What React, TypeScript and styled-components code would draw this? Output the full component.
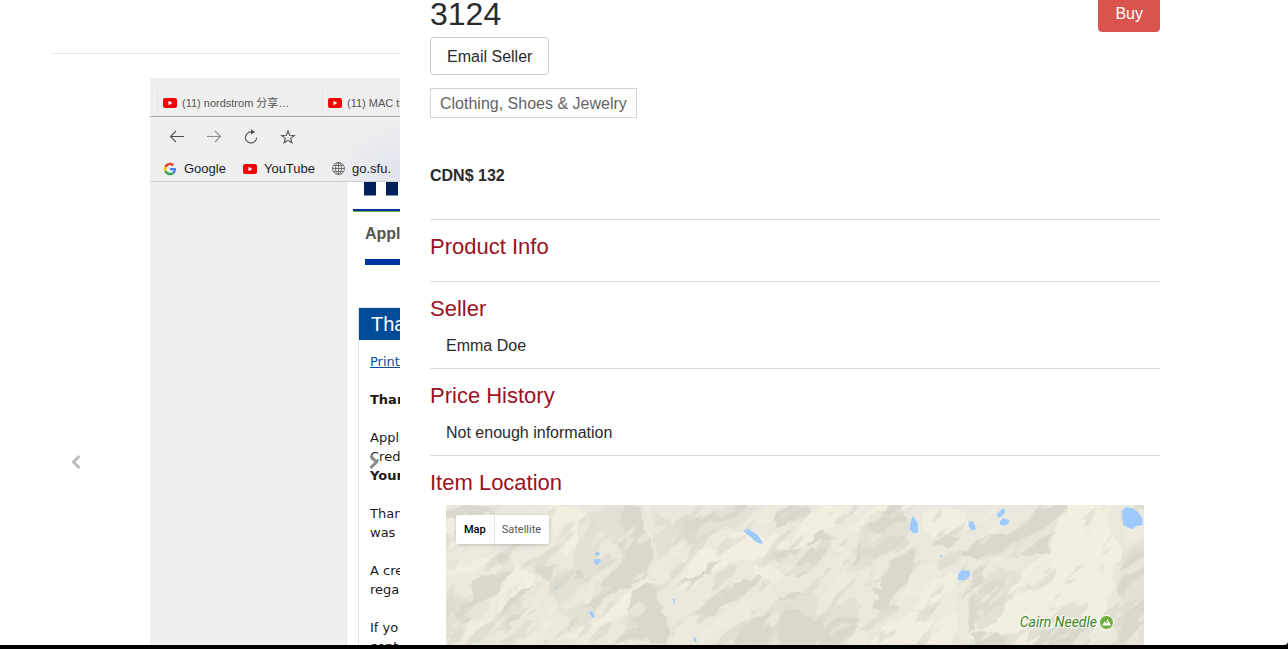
import React from "react";
import styled, { createGlobalStyle } from "styled-components";

const GlobalStyle = createGlobalStyle`
  *, *::before, *::after { box-sizing: border-box; }
  body {
    margin: 0;
    background: #fff;
    color: #292b2c;
    font-family: "Liberation Sans", "Noto Sans CJK SC", sans-serif;
    font-size: 16px;
    line-height: 24px;
  }
  h1, h2, p { margin: 0; font-weight: 400; }
  button { font: inherit; cursor: pointer; }
`;

const Shell = styled.div`
  display: flex;
  flex-direction: column;
  height: 100vh;
  overflow: hidden;
  background: #000;
`;

const Viewport = styled.div`
  flex: 1;
  min-height: 0;
  overflow: hidden;
  background: #fff;
  border-radius: 0 0 4px 0;
  margin-bottom: 4px;
`;

const Page = styled.main`
  display: grid;
  grid-template-columns: minmax(0, 35fr) minmax(0, 73fr);
  column-gap: 30px;
  margin-top: -6px;
  padding: 0 128px 0 50px;
`;

const Divider = styled.hr`
  margin: 59px 0 24px;
  border: 0;
  border-top: 1px solid #e8e8e8;
`;

const Carousel = styled.section`
  position: relative;
  height: 768px;
  overflow: hidden;
`;

const CarouselArrow = styled.button<{ $side: "left" | "right" }>`
  position: absolute;
  top: 0;
  bottom: 0;
  ${(p) => p.$side}: 0;
  width: 15%;
  padding: 0;
  border: 0;
  background: none;
  color: ${(p) => (p.$side === "left" ? "#bdbdbd" : "#8c8c8c")};
  display: flex;
  align-items: center;
  justify-content: center;
`;

const Slide = styled.div`
  display: flex;
  flex-direction: column;
  height: 100%;
  margin-left: 100px;
  overflow: hidden;
  white-space: nowrap;
  background: #efefef;
`;

const Chrome = styled.div`
  flex: none;
  height: 104px;
  border-bottom: 1px solid #cfcfd2;
  background: radial-gradient(70px 55px at 100% 95%, #e0e3ef, #efefef);
`;

const TabStrip = styled.div`
  display: flex;
  height: 39px;
  padding: 12px 0 0 7px;
  border-bottom: 1px solid #a9a9a9;
  background: #efefef;
`;

const Tab = styled.div`
  flex: 0 0 165px;
  display: flex;
  align-items: center;
  gap: 5px;
  padding-left: 5px;
  border-left: 1px solid #e6e6e6;
  color: #555;
  font-size: 11px;
`;

const Tools = styled.div`
  display: flex;
  align-items: center;
  gap: 21px;
  height: 39px;
  padding-left: 19px;
`;

const Bookmarks = styled.div`
  display: flex;
  align-items: center;
  gap: 17px;
  height: 25px;
  padding-left: 13px;
  color: #1c1c1c;
  font-size: 13px;
`;

const Bookmark = styled.span`
  display: flex;
  align-items: center;
  gap: 7px;
`;

const Sheet = styled.div`
  flex: 1;
  margin-left: 196px;
  border-left: 1px solid #e2e2e2;
  background: #fff;
`;

const BankLogo = styled.svg`
  display: block;
  margin-left: 17px;
`;

const LogoRule = styled.div`
  height: 3px;
  margin: 13px 0 0 6px;
  background: #0033a0;
  border-bottom: 1px solid #79b63b;
`;

const SheetNav = styled.div`
  margin: 10px 0 0 18px;
  padding-bottom: 13px;
  border-bottom: 6px solid #0033a0;
  color: #555;
  font-weight: 700;
`;

const Panel = styled.div`
  margin: 42px 0 0 11px;
  border: 1px solid #e2e4e8;
  border-right: 0;
`;

const PanelTitle = styled.div`
  height: 32px;
  padding-left: 12px;
  background: #004c9b;
  color: #fff;
  font-size: 20px;
  line-height: 32px;
`;

const Letter = styled.div`
  display: grid;
  row-gap: 19px;
  padding: 12px 0 0 11px;
  color: #1a1a1a;
  font-family: "DejaVu Sans", sans-serif;
  font-size: 13px;
  line-height: 19px;

  a { color: #0b4a9c; }
`;

const Header = styled.header`
  display: flex;
  align-items: flex-end;
  justify-content: space-between;
`;

const Title = styled.h1`
  font-size: 32px;
  line-height: 36px;
`;

const Button = styled.button<{ $danger?: boolean }>`
  height: 38px;
  padding: 2px 16px 0;
  border: 1px solid ${(p) => (p.$danger ? "#d9534f" : "#ccc")};
  border-radius: 4px;
  background: ${(p) => (p.$danger ? "#d9534f" : "#fff")};
  color: ${(p) => (p.$danger ? "#fff" : "#292b2c")};
`;

const Intro = styled.div`
  display: flex;
  flex-direction: column;
  align-items: flex-start;
  padding: 5px 0 31px;
`;

const Category = styled.span`
  margin: 13px 0 46px;
  padding: 3px 9px 1px;
  border: 1px solid #d4d4d4;
  color: #636566;
`;

const Price = styled.strong`
  font-weight: 700;
`;

const Section = styled.section`
  padding: 14px 0 10px;
  border-top: 1px solid #dcdcdc;
`;

const SectionTitle = styled.h2`
  margin-bottom: 9px;
  color: #9b1224;
  font-size: 22px;
  line-height: 26px;
`;

const SectionBody = styled.div`
  padding: 2px 16px 0;
  line-height: 25px;
`;

const MapBox = styled.div`
  position: relative;
  height: 400px;
  margin: 0 16px;
  overflow: hidden;
  background: #eae8dd;
  font-family: Roboto, sans-serif;

  > svg { display: block; width: 100%; height: 100%; }
`;

const MapTypes = styled.div`
  position: absolute;
  top: 10px;
  left: 10px;
  display: flex;
  height: 29px;
  border-radius: 2px;
  background: #fff;
  box-shadow: 0 1px 4px -1px rgba(0, 0, 0, 0.3);
`;

const MapType = styled.button<{ $active?: boolean }>`
  padding: 0 8px;
  border: 0;
  background: none;
  color: ${(p) => (p.$active ? "#000" : "#565656")};
  font-size: 11px;
  font-weight: ${(p) => (p.$active ? 500 : 400)};

  & + & {
    padding-left: 7px;
    border-left: 1px solid #e6e6e6;
  }
`;

const Peak = styled.div`
  position: absolute;
  top: 109px;
  right: 30px;
  display: flex;
  align-items: center;
  gap: 2px;
  height: 16px;
  color: #3f8420;
  font-size: 14px;
  font-style: italic;
  text-shadow: 0 0 2px #fff, 0 0 2px #fff, 1px 1px 1px #fff, -1px -1px 1px #fff;
`;

const YouTubeIcon = () => (
  <svg width="14" height="10" viewBox="0 0 14 10" aria-hidden="true">
    <rect width="14" height="10" rx="2" fill="#f00808" />
    <path d="M5.5 2.8v4.4L9.3 5z" fill="#fff" />
  </svg>
);

const GoogleIcon = () => (
  <svg width="14" height="14" viewBox="-3 -3 54 54" aria-hidden="true">
    <path fill="#ea4335" d="M24 9.5c3.5 0 6.700 1.200 9.200 3.600l6.900-6.900C35.900 2.400 30.500 0 24 0 14.600 0 6.500 5.400 2.600 13.200l8 6.200C12.400 13.700 17.700 9.500 24 9.500z" />
    <path fill="#4285f4" d="M47 24.500c0-1.600-.2-3.100-.4-4.500H24v9h12.900c-.6 3-2.200 5.500-4.700 7.200l7.700 6C44.400 38 47 31.800 47 24.500z" />
    <path fill="#fbbc05" d="M10.500 28.600a14.500 14.500 0 0 1 0-9.200l-8-6.200a24 24 0 0 0 0 21.600z" />
    <path fill="#34a853" d="M24 48c6.500 0 11.900-2.100 15.900-5.800l-7.700-6c-2.200 1.400-4.900 2.300-8.200 2.300-6.300 0-11.600-4.200-13.500-9.900l-8 6.200C6.500 42.600 14.600 48 24 48z" />
  </svg>
);

const GlobeIcon = () => (
  <svg width="13" height="13" viewBox="0 0 13 13" fill="none" stroke="#666" strokeWidth="0.9" aria-hidden="true">
    <circle cx="6.500" cy="6.500" r="6" />
    <ellipse cx="6.500" cy="6.500" rx="3" ry="6" />
    <path d="M6.500.5v12M.5 6.500h12M1.500 3.500h10M1.500 9.500h10" />
  </svg>
);

const Chevron = ({ flip }: { flip?: boolean }) => (
  <svg width="12" height="14" viewBox="0 0 12 14" fill="none" stroke="currentColor" strokeWidth="3" aria-hidden="true">
    <path d={flip ? "M2.500 1l6 6-6 6" : "M9.500 1l-6 6 6 6"} />
  </svg>
);

const ToolIcon = ({ d, faded, solid }: { d: string; faded?: boolean; solid?: string }) => (
  <svg width="16" height="16" viewBox="0 0 16 16" fill="none" stroke={faded ? "#8d8d8d" : "#505050"} strokeWidth="1.1" aria-hidden="true">
    <path d={d} />
    {solid && <path d={solid} fill="#505050" stroke="none" />}
  </svg>
);

const Terrain = () => (
  <svg viewBox="0 0 698 400" preserveAspectRatio="xMinYMin slice" aria-hidden="true">
    <defs>
      {/* roughens the outlines of the slopes */}
      <filter id="rough" filterUnits="userSpaceOnUse" x="-20" y="-20" width="740" height="440" colorInterpolationFilters="sRGB">
        <feTurbulence type="fractalNoise" baseFrequency="0.07" numOctaves="3" seed="4" result="n" />
        <feDisplacementMap in="SourceGraphic" in2="n" scale="12" xChannelSelector="R" yChannelSelector="G" />
      </filter>
      {/* small ridges, light and dark */}
      <filter id="ridgeDark" filterUnits="userSpaceOnUse" x="-400" y="-400" width="1500" height="1300" colorInterpolationFilters="sRGB">
        <feTurbulence type="fractalNoise" baseFrequency="0.022 0.07" numOctaves="3" seed="9" />
        <feColorMatrix values="0 0 0 0 0.855  0 0 0 0 0.847  0 0 0 0 0.8  14 0 0 0 -8" />
      </filter>
      <filter id="ridgeLight" filterUnits="userSpaceOnUse" x="-400" y="-400" width="1500" height="1300" colorInterpolationFilters="sRGB">
        <feTurbulence type="fractalNoise" baseFrequency="0.02 0.06" numOctaves="3" seed="21" />
        <feColorMatrix values="0 0 0 0 0.945  0 0 0 0 0.933  0 0 0 0 0.878  0 14 0 0 -8" />
      </filter>
    </defs>
    <g filter="url(#rough)">
      <g transform="translate(-6 -5) scale(.33333)">
        {/* sunlit slopes */}
        <g fill="#f2efe2">
          <path d="M330 15l80 5 50 30-30 40-20 55-40 20-30-60zM95 380l60-25 20-60 30-60 25-35 30-10-20 45-35 40-10 50-45 45-60 30-50 60-15-10z" />
          <path d="M350 415l60-30 70-30 50-45 40-40 45-30 20 5-50 45-20 45-60 35-60 25-50 25zM730 185l40-35 60-5 30-40 50-15 60 20 45-10 40 30-50 35-60 5-80 25-50 25-75 45-35 5 30-50z" />
          <path d="M935 190l50-10 30 45-20 25-55-35zM18 60l60-15 20 60-40 30-40 10zM18 210l60-15 80-30-30 40-110 25zM260 205l35 30-60 65-20 40-15-10 25-60z" />
        </g>
        <g fill="#e3e0d5">
          <path d="M420 60l60-40 60-5h65l-20 100-60-5-50 20 10 70-40 30-50-20 20-90zM345 210l60-10 50 30-20 60 30 60-60 30-50-60-20-60z" />
          <path d="M640 30l50 40 30 60-60 50-20-40zM230 310l80-60 20 20-50 50-80 60-50 30zM180 435l60-60 50-20-30 50-40 30zM18 310l60 30-20 60-40 10zM860 15h90l-40 60-80 20-70 30-40-20 60-50z" />
        </g>
        {/* shaded slopes */}
        <g fill="#dad8cc">
          <path d="M540 40l20-22 46-5 2 75 20 5 7 125-30 23-55 25-55 32-38 34-20-8 20-35-8-38 30-18 22-24 45-22-14-60 28-15-24-28z" />
          <path d="M175 172l30-17 16 12 2 30-22 33-26 37-25 42-17 43-39 10-26 15-14-7-3-35 18-20 22-7 2-30 10-35 30-12 37-12 2-25z" />
          <path d="M580 270l40-22 28 17 2 33 18 20 14 45 10 35-15 30h-150l38-35 30-18-30-35z" />
          <path d="M730 75l50-40 18 16 40-14-10 26-55 28-36 13zM835 50l55-25 35-10-15 20-55 25-48 20zM1055 165l50-15v75l-50 0-30 5-15-30z" />
          <path d="M730 242l50-22 20-25 48-20-22 20-14 28-54 17-60 20zM800 310l45-45 58-20 55-25 10 15-42 35-60 35-30 30-46 24 8-26-38 6z" />
          <path d="M940 360l40-25 38-40 30-20 50 0 20 50 0 130H900l12-30-50 30h-50l70-42zM1000 55l22-25 20-10 50 0 20 20-67 20-30 20zM18 35l60-20h60l40 25-42-5-18 18-50-10-50 15z" />
          <path d="M300 208l26-14 3 50-30-16zM255 265l20-7-35 45-52 48-20 8 38-50zM268 315l16-8-46 51-48 32 20-30zM405 208l13 14 4 20-18 5z" />
        </g>
      </g>
      <g transform="translate(344 -5) scale(.33333)">
        <g fill="#f2efe2">
          <path d="M830 -20h140l-10 105 30 60 60 15-50 40-40 70-10 80-60 70-290 15-80-20 60-40 90-120 50-60 60-40z" />
          <path d="M270 15h90l-20 40-70-10-60 40-40 10zM10 110l50-60 50-35h80l-60 60-60 40-70 40zM390 40l80-20 60 15-10 50-80 30-50-30zM400 270l60-40 60-20-40 60-50 50-60 20zM240 420l70-60 60-20 70 20 70-20-10 55-30 40H240z" />
        </g>
        <g fill="#e3e0d5">
          <path d="M220 70l60-40 70-5 20 70-60 50-90 60-50 20 30-80zM-60 150l120 5 60-5 20 40-70 20-70 20zM-50 310l110-40 60 40 90-10-10 60-50 40-20 35H-60z" />
          <path d="M530 320l40-80 60-30 60 10-40 70-20 70-60 30zM960 230l40-80 82-30v310h-100l-10-60 30-50z" />
        </g>
        <g fill="#dad8cc">
          <path d="M510 152l45-20 45-24 55-7 46-25 30-30 26-51h64l4 37-22 25-3 40-23 25-4 40-30-10-38 13-15 12-25-10-50 10-20 16-28-20-45-3z" />
          <path d="M370 142l10 13-10 30-10 8 2 37-14 27-22 31-15 40-26-8-22 10-14-12 8-36-12-18 25-5 10-45 30-40zM575 182l20-12 14 8-22 28-15 33-30 41-40 28-9-5 17-28 25-15 15-38zM432 127l28-16 40-7 15 9-25 17-28 13-30-2z" />
          <path d="M250 50l45-25 40-7 20 27-5 20-40 7-23 25-28 8-20-20zM70 105l30-24 22 30 28 10-60 5-40 18zM155 185l30-30 35-25-8 35-12 28-40 8zM-40 165l60-17 35 3 40-10 30 7 30 2-16 22-35-2-22 13-45 6-67 10z" />
          <path d="M535 310l20-24 3 42-4 58-20 10 2-40zM982 230l25-42 28-20 60-12v55l-63 22-30 48-22 5 8-25-15-8zM985 420l20-65 30-45 60-28v60l-53 38-10 75zM720 440l30-45 45-20 60 15 35-28 33-2-15 40-25 50H720z" />
          <path d="M-30 340l60-20 22 30 40 8 10 30 40-35 50-7 18 10-10 40-30 54H-30zM540 400l30-10 35 8 30 15 22-4-10 42h-90z" />
        </g>
      </g>
    </g>
    <g transform="rotate(-42 349 200)" opacity="0.6">
      <rect x="-300" y="-300" width="1300" height="1100" filter="url(#ridgeDark)" />
      <rect x="-300" y="-300" width="1300" height="1100" filter="url(#ridgeLight)" />
    </g>
    <g fill="#9ecbff">
      <path transform="translate(-6 -5) scale(.33333)" d="M909 91l17-3 18 11 12 8 7 14 7 9-10 1-16-8-12-13-12-8zM467 157l9-2 5 8-8 4-8-3zM462 178l20-1 2 6-12 11-8-2zM447 335l10-2 8 20-10-1zM697 297h7l1 15-3-1-2-11zM759 411l7 3 5 15-8-4zM347 257h4v7h-4z" />
      <path transform="translate(344 -5) scale(.33333)" d="M369 47l6 11 8 8 1 32-15 2-10-12 3-24zM536 66l11-3 8 13 3 12-12 4-10-15zM644 24l1 14-12 12-9 3-3-10 11-13zM630 62l12-9 4 5 12 1-3 12-11 6-15-3zM995 33l12-12 25 5 17 15 8 15 1 20-19 2-10 9-20-6-10-8zM449 164l5 2 6 2-7 4zM504 223l14-14 5 3 15-1 3 15-13 13-14 2-11-3z" />
    </g>
  </svg>
);

const PeakIcon = () => (
  <svg width="15" height="15" viewBox="0 0 15 15" aria-hidden="true">
    <circle cx="7.500" cy="7.500" r="7" fill="#72ac3c" stroke="#fff" />
    <path d="M3 10.500l2.700-4 1.200 1.400L8.600 4 12 10.500z" fill="#fff" />
    <path d="M8.300 6.500L7.500 8.500" stroke="#72ac3c" />
  </svg>
);

export default function App() {
  return (
    <>
      <GlobalStyle />
      <Shell>
        <Viewport>
          <Page>
            <div>
              <Divider />
              <Carousel aria-label="Item photos">
                <Slide>
                  <Chrome>
                    <TabStrip>
                      <Tab><YouTubeIcon />(11) nordstrom 分享…</Tab>
                      <Tab><YouTubeIcon />(11) MAC t</Tab>
                    </TabStrip>
                    <Tools>
                      <ToolIcon d="M15 7.500H1.500M7 2L1.500 7.500 7 13" />
                      <ToolIcon faded d="M1 7.500h13.500M9 2L14.500 7.500 9 13" />
                      <ToolIcon d="M9.500 2.900H8A5.600 5.600 0 1 0 13.600 8.500" solid="M8 .2L12.200 2.900 8 5.600z" />
                      <ToolIcon d="M8 2l1.700 4.300 4.500.2-3.500 2.900 1.200 4.400L8 11.300l-3.900 2.500 1.200-4.400L1.800 6.500l4.500-.2z" />
                    </Tools>
                    <Bookmarks>
                      <Bookmark><GoogleIcon />Google</Bookmark>
                      <Bookmark><YouTubeIcon />YouTube</Bookmark>
                      <Bookmark><GlobeIcon />go.sfu.</Bookmark>
                    </Bookmarks>
                  </Chrome>
                  <Sheet>
                    <BankLogo width="36" height="14" viewBox="0 0 36 14" aria-hidden="true">
                      <path d="M0 0h12v13.500H0zM22 0h12v13.500H22z" fill="#00205b" />
                    </BankLogo>
                    <LogoRule />
                    <SheetNav>Appl</SheetNav>
                    <Panel>
                      <PanelTitle>Tha</PanelTitle>
                      <Letter>
                        <p><a href="#print">Print</a></p>
                        <p><b>Than</b></p>
                        <p>Appli<br />Cred<br /><b>Your</b></p>
                        <p>Than<br />was</p>
                        <p>A cre<br />rega</p>
                        <p>If yo<br />cont</p>
                      </Letter>
                    </Panel>
                  </Sheet>
                </Slide>
                <CarouselArrow $side="left" aria-label="Previous"><Chevron /></CarouselArrow>
                <CarouselArrow $side="right" aria-label="Next"><Chevron flip /></CarouselArrow>
              </Carousel>
            </div>
            <div>
              <Header>
                <Title>3124</Title>
                <Button $danger>Buy</Button>
              </Header>
              <Intro>
                <Button>Email Seller</Button>
                <Category>Clothing, Shoes &amp; Jewelry</Category>
                <Price>CDN$ 132</Price>
              </Intro>
              <Section>
                <SectionTitle>Product Info</SectionTitle>
                <SectionBody />
              </Section>
              <Section>
                <SectionTitle>Seller</SectionTitle>
                <SectionBody>Emma Doe</SectionBody>
              </Section>
              <Section>
                <SectionTitle>Price History</SectionTitle>
                <SectionBody>Not enough information</SectionBody>
              </Section>
              <Section>
                <SectionTitle>Item Location</SectionTitle>
                <MapBox>
                  <Terrain />
                  <MapTypes>
                    <MapType $active>Map</MapType>
                    <MapType>Satellite</MapType>
                  </MapTypes>
                  <Peak>Cairn Needle<PeakIcon /></Peak>
                </MapBox>
              </Section>
            </div>
          </Page>
        </Viewport>
      </Shell>
    </>
  );
}
